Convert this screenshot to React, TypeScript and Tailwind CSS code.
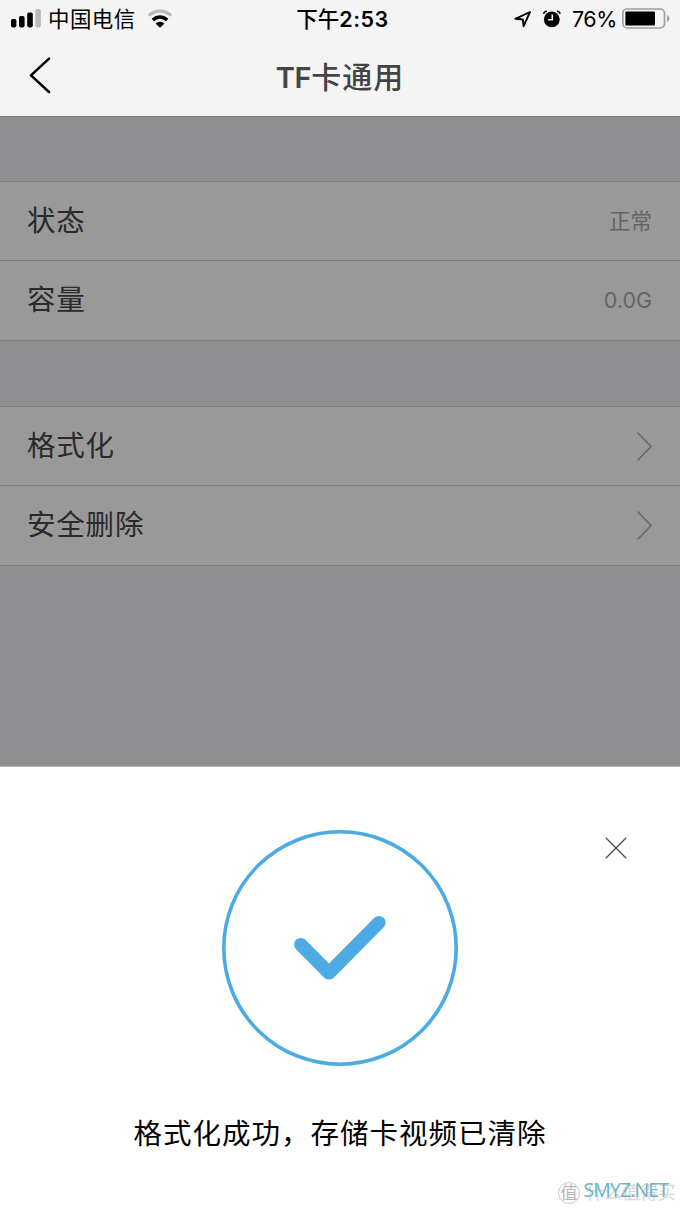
import React from "react";

const infoRows = [
  { label: "状态", value: "正常" },
  { label: "容量", value: "0.0G" },
];

const actionRows = ["格式化", "安全删除"];

const StatusBar = () => {
  return (
    <div className="flex h-[38px] items-center text-black">
      <div className="flex w-[227px] items-center pl-[11px]">
        <svg width="31" height="20" viewBox="0 0 31 20">
          <rect x="0" y="10" width="5.4" height="8.4" rx="1.8" />
          <rect x="8" y="7" width="5.6" height="11.4" rx="1.8" />
          <rect x="16.2" y="3.6" width="5.6" height="14.8" rx="1.8" />
          <rect x="24.3" y="0" width="5.6" height="18.4" rx="1.8" fill="#b9b9b9" />
        </svg>
        <span className="ml-[6px] text-[21.5px] leading-[38px] tracking-[0.4px] whitespace-nowrap">
          中国电信
        </span>
        <svg className="ml-[11px]" width="26" height="20" viewBox="0 0 26 20">
          <path d="M1.8 6.6C8.2 .6 17.8 .6 24.2 6.6" fill="none" stroke="#b9b9b9" strokeWidth="3.3" />
          <path d="M5.8 11C10.2 7.2 15.8 7.2 20.2 11" fill="none" stroke="#000" strokeWidth="3.6" />
          <path d="M8.8 14.7C11.3 12.2 14.7 12.2 17.2 14.7L13 18.8Z" />
        </svg>
      </div>
      <div className="w-[231px] text-center text-[21.5px] leading-[38px] font-medium whitespace-nowrap">
        下午<span className="font-semibold tracking-[0.5px]">2:53</span>
      </div>
      <div className="flex flex-1 items-center pl-[56px]">
        <svg width="18" height="18" viewBox="0 0 18 18">
          <path d="M1.4 8.8L16 2L9.6 16.2L8.8 9.5Z" fill="none" stroke="#000" strokeWidth="1.9" strokeLinejoin="round" />
        </svg>
        <svg className="ml-[11px]" width="18" height="18" viewBox="0 0 18 18">
          <circle cx="8.8" cy="9.4" r="7.9" />
          <path d="M.6 3.8C1 2.4 2.2 1.4 3.8 1M17.2 3.8C16.8 2.4 15.6 1.4 14 1" fill="none" stroke="#000" strokeWidth="1.7" />
          <path d="M9.3 4.6V9.8H5.2" fill="none" stroke="#f4f4f4" strokeWidth="1.6" />
        </svg>
        <span className="ml-[11px] w-[50px] text-[21.5px] leading-[38px] tracking-[-0.5px] whitespace-nowrap">
          76%
        </span>
        <svg width="48" height="22" viewBox="0 0 48 22">
          <rect x=".9" y="1" width="41.6" height="19" rx="4.2" fill="none" stroke="#9d9d9f" strokeWidth="1.6" />
          <rect x="3.4" y="3.6" width="29.6" height="13.8" rx="1" />
          <path d="M45 7C48.2 8.4 48.2 12.6 45 14Z" fill="#9d9d9f" />
        </svg>
      </div>
    </div>
  );
};

const Header = () => {
  return (
    <div className="grid h-[78px] grid-cols-3 items-center">
      <svg className="mb-[4px] ml-[29px]" width="23" height="37" viewBox="0 0 23 37">
        <path d="M20 1.6L2 18.3L20 35" fill="none" stroke="#000" strokeWidth="2.5" strokeLinecap="round" strokeLinejoin="round" />
      </svg>
      <h1 className="text-center text-[30px] leading-[76px] font-medium tracking-[1px] whitespace-nowrap text-[#444]">
        <span className="text-[29px] font-semibold tracking-[-0.4px]">TF</span>卡通用
      </h1>
    </div>
  );
};

const rowClass =
  "flex items-center justify-between border-b border-[#808080] bg-[#999] pr-[28px] pl-[27px]";
const labelClass = "text-[28.5px] tracking-[0.8px] text-[#2a2a2a]";

const CardSettings = () => {
  return (
    <main className="h-[650px] border-t border-[#7b7b7d] bg-[#8f8f91] pt-[64px]">
      <div className="border-t border-[#808080]">
        {infoRows.map((row, index) => (
          <div key={row.label} className={`${rowClass} ${index === 0 ? "h-[79px]" : "h-[80px]"}`}>
            <span className={labelClass}>{row.label}</span>
            <span className="text-[21.5px] text-[#656565]">{row.value}</span>
          </div>
        ))}
      </div>
      <div className="mt-[65px] border-t border-[#808080]">
        {actionRows.map((label, index) => (
          <div key={label} className={`${rowClass} ${index === 0 ? "h-[79px]" : "h-[80px]"}`}>
            <span className={labelClass}>{label}</span>
            <svg width="15" height="29" viewBox="0 0 15 29">
              <path d="M1 1L14 14.5L1 28" fill="none" stroke="#6b6b6b" strokeWidth="1.7" strokeLinecap="round" />
            </svg>
          </div>
        ))}
      </div>
    </main>
  );
};

const ResultSheet = () => {
  return (
    <section className="relative h-[443px] border-t border-[#b5b5b6] bg-white pt-[62px]">
      <button className="absolute top-[70px] right-[53px]" aria-label="关闭">
        <svg width="22" height="22" viewBox="0 0 22 22">
          <path d="M.8 .8L21.2 21.2M21.2 .8L.8 21.2" stroke="#4d4d4d" strokeWidth="1.3" />
        </svg>
      </button>
      <svg className="mx-auto block" width="238" height="238" viewBox="0 0 238 238">
        <circle cx="119" cy="119" r="116.2" fill="none" stroke="#4babe2" strokeWidth="3.6" />
        <path d="M79.7 115.5L108 144L158 93.5" fill="none" stroke="#4babe2" strokeWidth="13.2" strokeLinecap="round" strokeLinejoin="round" />
      </svg>
      <p className="mt-[47px] text-center text-[28.5px] leading-[40px] tracking-[1px] whitespace-nowrap text-black">
        格式化成功，存储卡视频已清除
      </p>
      {/* watermark */}
      <div className="absolute right-[4px] bottom-[2px] flex items-center text-[#d6d6d6]">
        <span className="flex h-[22px] w-[22px] items-center justify-center rounded-full border border-[#c9c9c9] text-[17px] leading-[20px] text-[#b5b5b5]">
          值
        </span>
        <span className="ml-[6px] text-[18px] leading-[28px]">什么值得买</span>
      </div>
      <div className="absolute right-[12px] bottom-[5px] font-['Open_Sans'] text-[19.5px] leading-[28px] tracking-[-0.9px] text-[#6ab4c8]">
        SMYZ.NET
      </div>
    </section>
  );
};

const App = () => {
  return (
    <div className="w-[680px] overflow-hidden bg-[#f4f4f4] font-['Inter','Noto_Sans_CJK_SC',sans-serif]">
      <StatusBar />
      <Header />
      <CardSettings />
      <ResultSheet />
    </div>
  );
};

export default App;
